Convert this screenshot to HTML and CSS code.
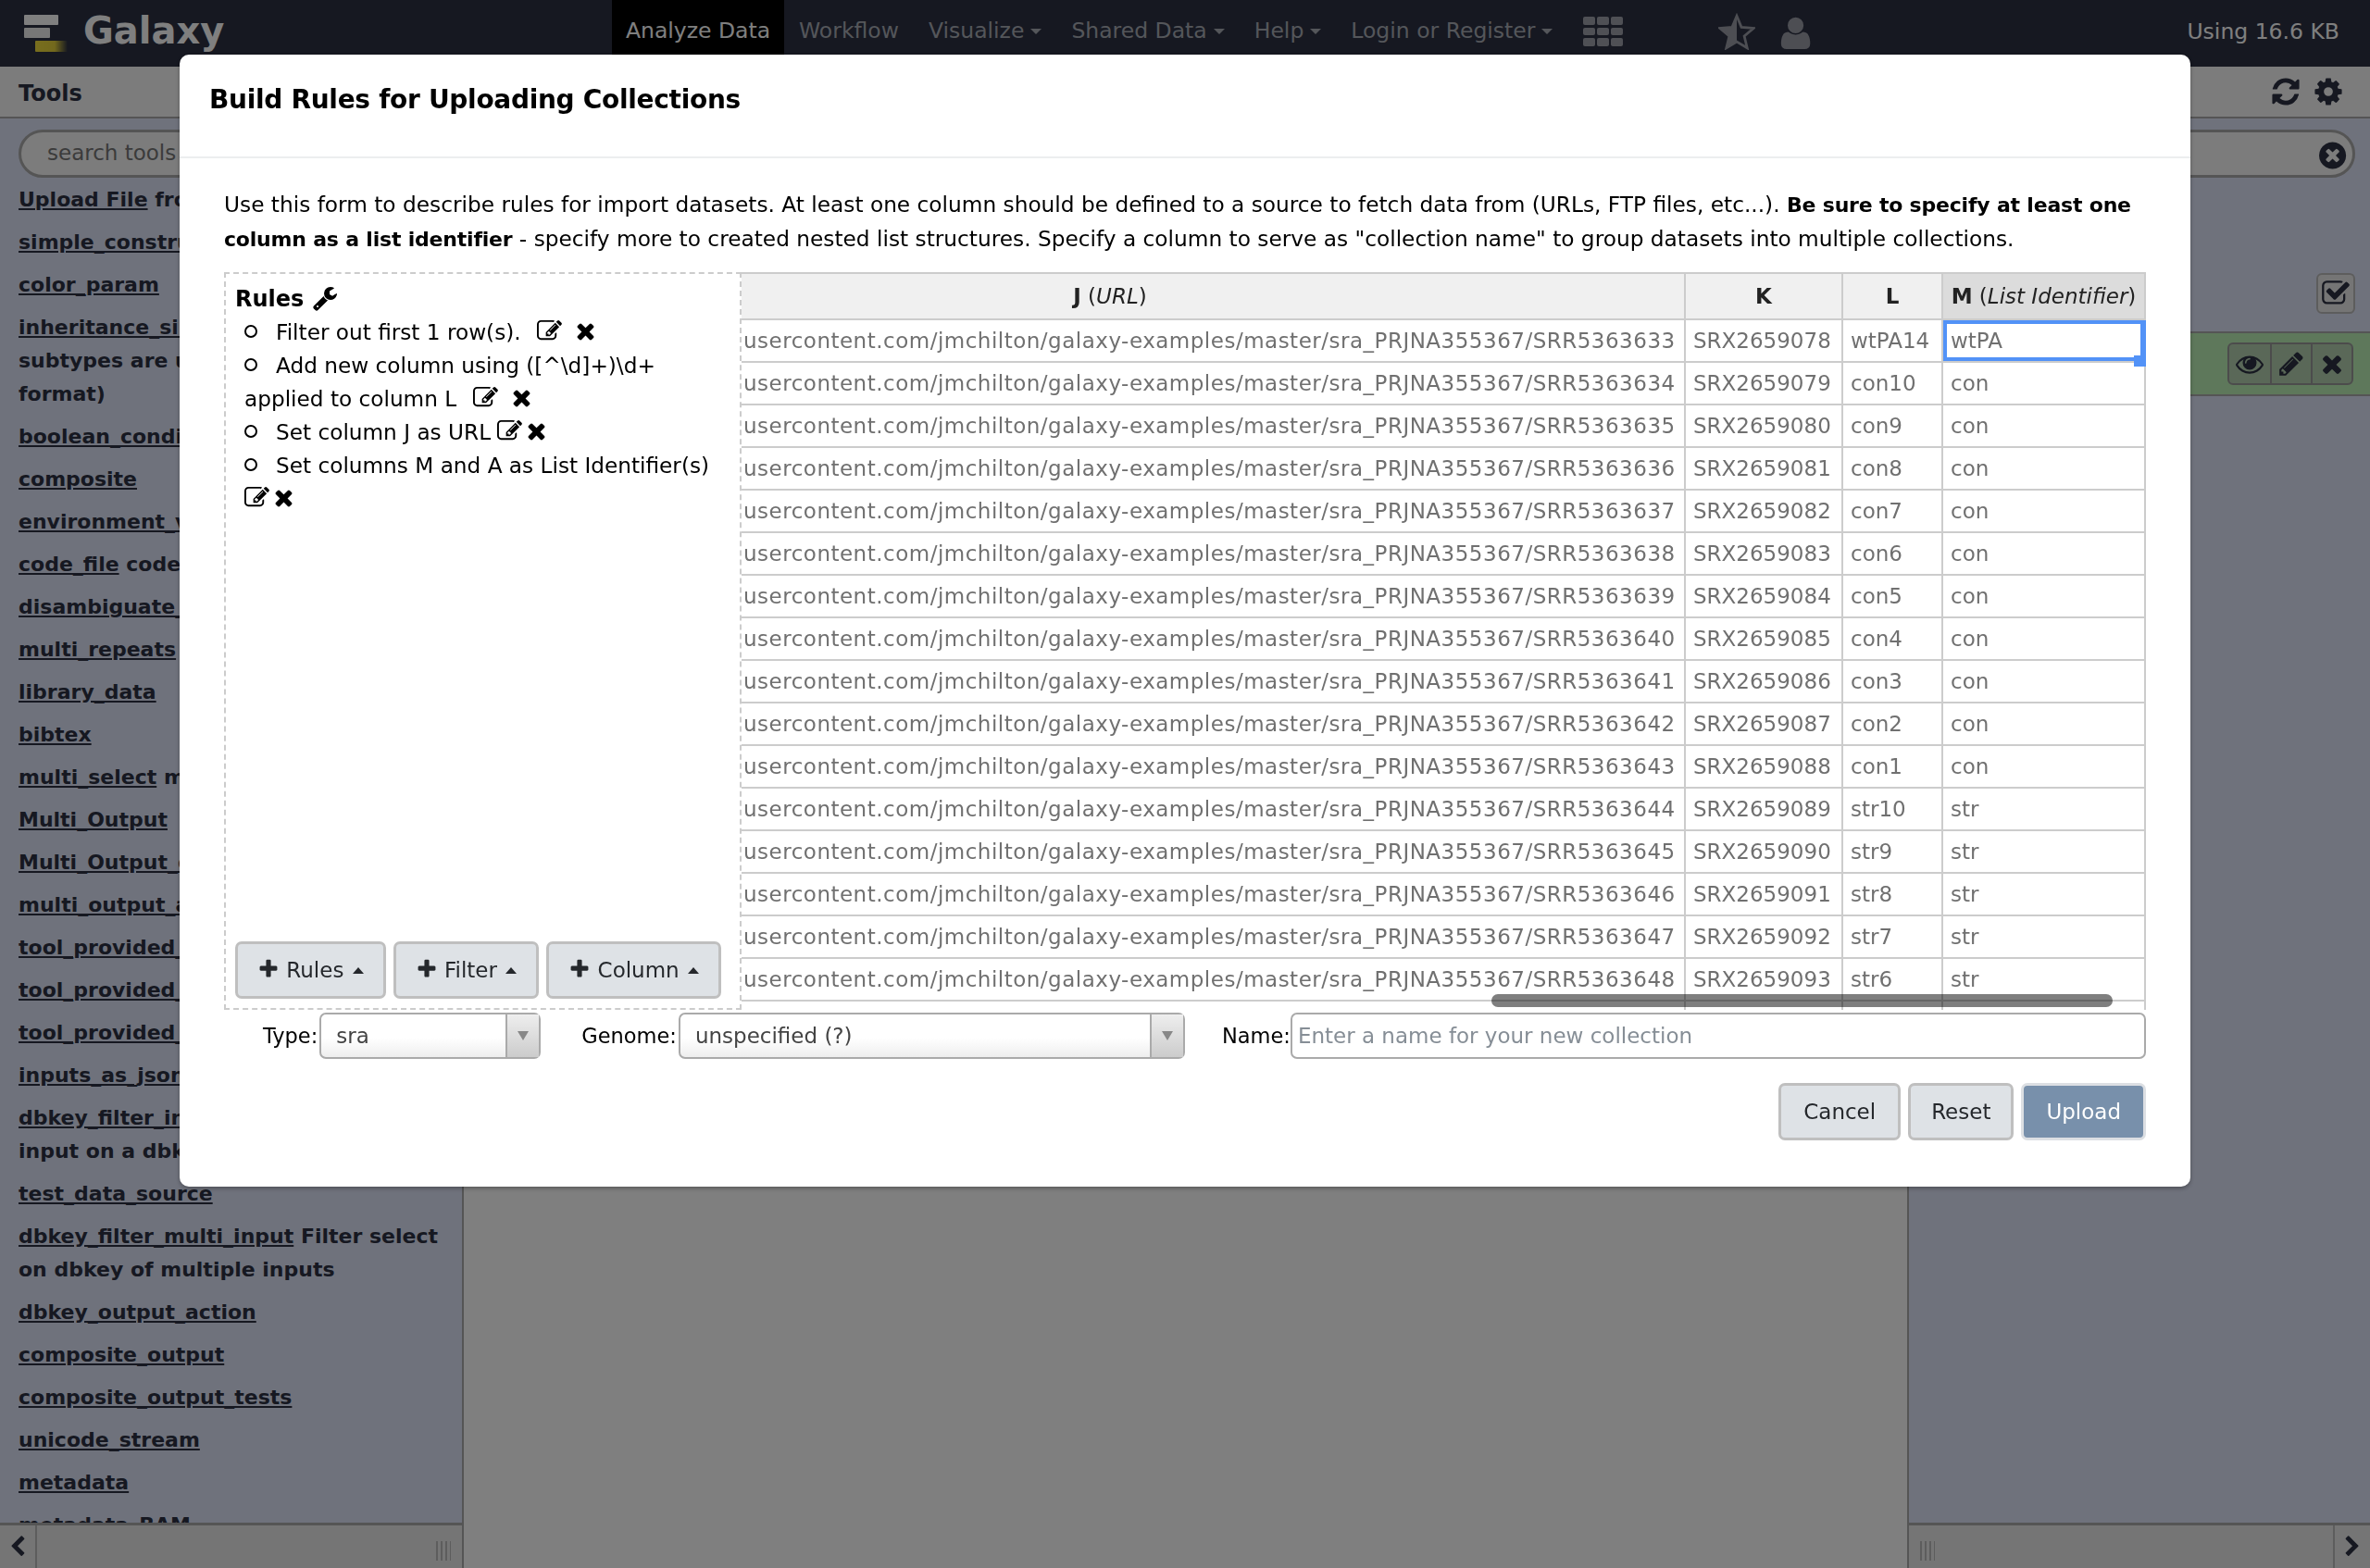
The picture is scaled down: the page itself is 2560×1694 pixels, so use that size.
FILE: index.html
```html
<!DOCTYPE html>
<html lang="en">
<head>
    <meta charset="UTF-8">
    <title>Galaxy</title>
    <link rel="stylesheet" href="styles.css">
</head>
<body>
    <svg class="icon-defs" xmlns="http://www.w3.org/2000/svg">
        <defs><linearGradient id="logo-gold"><stop offset="0" stop-color="#f0dc3c"/><stop offset=".6" stop-color="#e6d23a"/><stop offset="1" stop-color="#2c3143"/></linearGradient></defs>
        <symbol id="i-times" viewBox="0 0 1792 1792"><path d="M1490 1322q0 40-28 68l-136 136q-28 28-68 28t-68-28l-294-294-294 294q-28 28-68 28t-68-28l-136-136q-28-28-28-68t28-68l294-294-294-294q-28-28-28-68t28-68l136-136q28-28 68-28t68 28l294 294 294-294q28-28 68-28t68 28l136 136q28 28 28 68t-28 68l-294 294 294 294q28 28 28 68z"/></symbol>
        <symbol id="i-plus" viewBox="0 0 1792 1792"><path d="M1600 736v192q0 40-28 68t-68 28h-416v416q0 40-28 68t-68 28h-192q-40 0-68-28t-28-68v-416h-416q-40 0-68-28t-28-68v-192q0-40 28-68t68-28h416v-416q0-40 28-68t68-28h192q40 0 68 28t28 68v416h416q40 0 68 28t28 68z"/></symbol>
        <symbol id="i-left" viewBox="0 0 1792 1792"><path d="M1427 301l-531 531 531 531q19 19 19 45t-19 45l-166 166q-19 19-45 19t-45-19l-742-742q-19-19-19-45t19-45l742-742q19-19 45-19t45 19l166 166q19 19 19 45t-19 45z"/></symbol>
        <symbol id="i-right" viewBox="0 0 1792 1792"><path d="M1363 877l-742 742q-19 19-45 19t-45-19l-166-166q-19-19-19-45t19-45l531-531-531-531q-19-19-19-45t19-45l166-166q19-19 45-19t45 19l742 742q19 19 19 45t-19 45z"/></symbol>
        <symbol id="i-user" viewBox="0 0 1792 1792"><path d="M1536 1399q0 120-73 189.500t-194 69.500h-874q-121 0-194-69.500t-73-189.500q0-53 3.500-103.500t14-109 26.500-108.500 43-97.500 62-81 85.500-53.500 111.500-20q9 0 42 21.500t74.500 48 108 48 133.500 21.500 133.500-21.500 108-48 74.500-48 42-21.500q61 0 111.500 20t85.500 53.500 62 81 43 97.500 26.500 108.500 14 109 3.500 103.500zm-320-887q0 159-112.500 271.500t-271.500 112.500-271.500-112.500-112.500-271.500 112.500-271.500 271.500-112.500 271.500 112.500 112.500 271.500z"/></symbol>
        <symbol id="i-refresh" viewBox="0 0 1792 1792"><path d="M1639 1056q0 5-1 7-64 268-268 434.500t-478 166.500q-146 0-282.500-55t-243.500-157l-129 129q-19 19-45 19t-45-19-19-45v-448q0-26 19-45t45-19h448q26 0 45 19t19 45-19 45l-137 137q71 66 161 102t187 36q134 0 250-65t186-179q11-17 53-117 8-23 30-23h192q13 0 22.500 9.500t9.500 22.500zm25-800v448q0 26-19 45t-45 19h-448q-26 0-45-19t-19-45 19-45l138-138q-148-137-349-137-134 0-250 65t-186 179q-11 17-53 117-8 23-30 23h-199q-13 0-22.500-9.500t-9.500-22.500v-7q65-268 270-434.500t480-166.500q146 0 284 55.500t245 156.500l130-129q19-19 45-19t45 19 19 45z"/></symbol>
        <symbol id="i-cog" viewBox="0 0 1792 1792"><path d="M1152 896q0-106-75-181t-181-75-181 75-75 181 75 181 181 75 181-75 75-181zm512-109v222q0 12-8 23t-20 13l-185 28q-19 54-39 91 35 50 107 138 10 12 10 25t-9 23q-27 37-99 108t-94 71q-12 0-26-9l-138-108q-44 23-91 38-16 136-29 186-7 28-36 28h-222q-14 0-24.500-8.500t-11.500-21.500l-28-184q-49-16-90-37l-141 107q-10 9-25 9-14 0-25-11-126-114-165-168-7-10-7-23 0-12 8-23 15-21 51-66.500t54-70.500q-27-50-41-99l-183-27q-13-2-21-12.500t-8-23.500v-222q0-12 8-23t19-13l186-28q14-46 39-92-40-57-107-138-10-12-10-24 0-10 9-23 26-36 98.500-107.500t94.500-71.500q13 0 26 10l138 107q44-23 91-38 16-136 29-186 7-28 36-28h222q14 0 24.500 8.500t11.500 21.500l28 184q49 16 90 37l142-107q9-9 24-9 13 0 25 10 129 119 165 170 7 8 7 22 0 12-8 23-15 21-51 66.500t-54 70.500q26 50 41 98l183 28q13 2 21 12.500t8 23.500z"/></symbol>
        <symbol id="i-wrench" viewBox="0 0 1792 1792"><path d="M448 1472q0-26-19-45t-45-19-45 19-19 45 19 45 45 19 45-19 19-45zm644-420l-682 682q-37 37-90 37-52 0-91-37l-106-108q-38-36-38-90 0-53 38-91l681-681q39 98 114.500 173.500t173.500 114.500zm634-435q0 39-23 106-47 134-164.500 217.500t-258.500 83.500q-185 0-316.500-131.500t-131.500-316.500 131.500-316.500 316.500-131.500q58 0 121.500 16.500t107.500 46.500q16 11 16 28t-16 28l-293 169v224l193 107q5-3 79-48.500t135.500-81 70.500-35.500q15 0 23.500 10t8.500 25z"/></symbol>
        <symbol id="i-pencil" viewBox="0 0 1792 1792"><path d="M491 1536l91-91-235-235-91 91v107h128v128h107zm523-928q0-22-22-22-10 0-17 7l-542 542q-7 7-7 17 0 22 22 22 10 0 17-7l542-542q7-7 7-17zm-54-192l416 416-832 832h-416v-416zm683 96q0 53-37 90l-166 166-416-416 166-165q36-38 90-38 53 0 91 38l235 234q37 39 37 91z"/></symbol>
        <symbol id="i-eye" viewBox="0 0 1792 1792"><path d="M1664 960q-152-236-381-353 61 104 61 225 0 185-131.500 316.500t-316.500 131.500-316.500-131.500-131.500-316.500q0-121 61-225-229 117-381 353 133 205 333.500 326.500t434.500 121.500 434.500-121.500 333.500-326.500zm-720-384q0-20-14-34t-34-14q-125 0-214.500 89.500t-89.500 214.500q0 20 14 34t34 14 34-14 14-34q0-86 61-147t147-61q20 0 34-14t14-34zm848 384q0 34-20 69-140 230-376.500 368.500t-499.500 138.500-499.500-139-376.500-368q-20-35-20-69t20-69q140-229 376.500-368t499.500-139 499.500 139 376.500 368q20 35 20 69z"/></symbol>
        <symbol id="i-edit" viewBox="0 0 1792 1792"><path d="M888 1184l116-116-152-152-116 116v56h96v96h56zm440-720q-16-16-33 1l-350 350q-17 17-1 33t33-1l350-350q17-17 1-33zm80 594v190q0 119-84.500 203.500t-203.500 84.500h-832q-119 0-203.500-84.500t-84.500-203.500v-832q0-119 84.500-203.500t203.500-84.500h832q63 0 117 25 15 7 18 23 3 17-9 29l-49 49q-14 14-32 8-23-6-45-6h-832q-66 0-113 47t-47 113v832q0 66 47 113t113 47h832q66 0 113-47t47-113v-126q0-13 9-22l64-64q15-15 35-7t20 29zm-96-738l288 288-672 672h-288v-288zm444 132l-92 92-288-288 92-92q28-28 68-28t68 28l152 152q28 28 28 68t-28 68z"/></symbol>
        <symbol id="i-check" viewBox="0 0 1792 1792"><path d="M1472 930v318q0 119-84.500 203.500t-203.500 84.500h-832q-119 0-203.500-84.500t-84.500-203.500v-832q0-119 84.500-203.500t203.500-84.500h832q63 0 117 25 15 7 18 23 3 17-9 29l-49 49q-10 10-23 10-3 0-9-2-23-6-45-6h-832q-66 0-113 47t-47 113v832q0 66 47 113t113 47h832q66 0 113-47t47-113v-254q0-13 9-22l64-64q10-10 23-10 6 0 12 3 20 8 20 29zm231-489l-814 814q-24 24-57 24t-57-24l-430-430q-24-24-24-57t24-57l110-110q24-24 57-24t57 24l263 263 647-647q24-24 57-24t57 24l110 110q24 24 24 57t-24 57z"/></symbol>
        <symbol id="i-clear" viewBox="0 0 1792 1792"><path d="M1149 1122q0-26-19-45l-181-181 181-181q19-19 19-45 0-27-19-46l-90-90q-19-19-46-19-26 0-45 19l-181 181-181-181q-19-19-45-19-27 0-46 19l-90 90q-19 19-19 46 0 26 19 45l181 181-181 181q-19 19-19 45 0 27 19 46l90 90q19 19 46 19 26 0 45-19l181-181 181 181q19 19 45 19 27 0 46-19l90-90q19-19 19-46zm387-226q0 209-103 385.500t-279.500 279.500-385.500 103-385.500-103-279.500-279.500-103-385.500 103-385.500 279.500-279.500 385.500-103 385.500 103 279.500 279.500 103 385.500z"/></symbol>
    </svg>

    <!-- masthead -->
    <header class="masthead">
        <a class="brand">
            <svg class="brand-logo" viewBox="0 0 48 41"><rect x="0" y="0" width="37" height="11" rx="1" fill="#fff"/><rect x="0" y="14" width="28" height="11" rx="1" fill="#eee"/><rect x="12" y="28" width="35" height="12" rx="1" fill="url(#logo-gold)"/></svg>
            <span class="brand-name">Galaxy</span>
        </a>
        <nav class="nav">
            <a class="nav-item active">Analyze Data</a>
            <a class="nav-item">Workflow</a>
            <a class="nav-item">Visualize<i class="caret-down"></i></a>
            <a class="nav-item">Shared Data<i class="caret-down"></i></a>
            <a class="nav-item">Help<i class="caret-down"></i></a>
            <a class="nav-item">Login or Register<i class="caret-down"></i></a>
            <span class="apps-grid"><i></i><i></i><i></i><i></i><i></i><i></i><i></i><i></i><i></i></span>
            <svg class="nav-star" viewBox="0 0 36 36"><path d="M18 3l4.500 10.800 11.800 1-9 7.700 2.800 11.500L18 27.900 7.900 34l2.800-11.500-9-7.700 11.800-1z" fill="none" stroke="#9a9ca6" stroke-width="2.500"/><path d="M18 3v24.900L7.900 34l2.800-11.500-9-7.700 11.800-1z" fill="#9a9ca6"/></svg>
            <svg class="nav-user"><use href="#i-user"/></svg>
        </nav>
        <span class="quota">Using 16.6 KB</span>
    </header>

    <div class="panels">
        <!-- tools panel -->
        <aside class="side tools">
            <div class="side-head">
                <span class="side-title">Tools</span>
            </div>
            <div class="search-pill"><span class="search-hint">search tools</span></div>
            <div class="tool-list">
                <p><a>Upload File</a> from your computer</p>
                <p><a>simple_constructs</a></p>
                <p><a>color_param</a></p>
                <p><a>inheritance_simple</a> tool<br>subtypes are used<br>format)</p>
                <p><a>boolean_conditional</a></p>
                <p><a>composite</a></p>
                <p><a>environment_variables</a></p>
                <p><a>code_file</a> code</p>
                <p><a>disambiguate_cond</a></p>
                <p><a>multi_repeats</a></p>
                <p><a>library_data</a></p>
                <p><a>bibtex</a></p>
                <p><a>multi_select</a> multi</p>
                <p><a>Multi_Output</a></p>
                <p><a>Multi_Output_dynamic</a></p>
                <p><a>multi_output_assign</a></p>
                <p><a>tool_provided_metadata</a></p>
                <p><a>tool_provided_metadata</a></p>
                <p><a>tool_provided_metadata</a></p>
                <p><a>inputs_as_json</a></p>
                <p><a>dbkey_filter_input</a> Filter<br>input on a dbkey</p>
                <p><a>test_data_source</a></p>
                <p><a>dbkey_filter_multi_input</a> Filter select<br>on dbkey of multiple inputs</p>
                <p><a>dbkey_output_action</a></p>
                <p><a>composite_output</a></p>
                <p><a>composite_output_tests</a></p>
                <p><a>unicode_stream</a></p>
                <p><a>metadata</a></p>
                <p><a>metadata_BAM</a></p>
            </div>
            <div class="side-foot">
                <span class="foot-arrow"><svg class="foot-icon"><use href="#i-left"/></svg></span>
                <span class="foot-grip"></span>
            </div>
        </aside>

        <main class="center"></main>

        <!-- history panel -->
        <aside class="side history">
            <div class="side-head side-head-right">
                <svg class="head-icon"><use href="#i-refresh"/></svg>
                <svg class="head-icon"><use href="#i-cog"/></svg>
            </div>
            <div class="search-pill search-pill-right"><svg class="clear-icon"><use href="#i-clear"/></svg></div>
            <div class="history-tools"><span class="check-btn"><svg><use href="#i-check"/></svg></span></div>
            <div class="history-item">
                <span class="item-btns">
                    <span><svg><use href="#i-eye"/></svg></span>
                    <span><svg><use href="#i-pencil"/></svg></span>
                    <span><svg><use href="#i-times"/></svg></span>
                </span>
            </div>
            <div class="history-fill"></div>
            <div class="side-foot side-foot-right">
                <span class="foot-grip"></span>
                <span class="foot-arrow"><svg class="foot-icon"><use href="#i-right"/></svg></span>
            </div>
        </aside>
    </div>

    <div class="backdrop"></div>

    <!-- rule builder modal -->
    <section class="modal">
        <h4 class="modal-title">Build Rules for Uploading Collections</h4>
        <div class="modal-body">
            <p class="help">Use this form to describe rules for import datasets. At least one column should be defined to a source to fetch data from (URLs, FTP files, etc...). <b>Be sure to specify at least one column as a list identifier</b> - specify more to created nested list structures. Specify a column to serve as "collection name" to group datasets into multiple collections.</p>
            <div class="builder">
                <div class="rules">
                    <div class="rules-title">Rules <svg class="ico ico-wrench"><use href="#i-wrench"/></svg></div>
                    <ul class="rule-list">
                        <li>Filter out first 1 row(s). <span class="rule-actions wide"><svg class="ico"><use href="#i-edit"/></svg><svg class="ico"><use href="#i-times"/></svg></span></li>
                        <li>Add new column using ([^\d]+)\d+ applied to column L <span class="rule-actions wide"><svg class="ico"><use href="#i-edit"/></svg><svg class="ico"><use href="#i-times"/></svg></span></li>
                        <li>Set column J as URL <span class="rule-actions"><svg class="ico"><use href="#i-edit"/></svg><svg class="ico"><use href="#i-times"/></svg></span></li>
                        <li>Set columns M and A as List Identifier(s) <span class="rule-actions"><svg class="ico"><use href="#i-edit"/></svg><svg class="ico"><use href="#i-times"/></svg></span></li>
                    </ul>
                    <div class="rule-btns">
                        <button class="btn"><svg class="ico"><use href="#i-plus"/></svg> Rules <i class="caret-up"></i></button>
                        <button class="btn"><svg class="ico"><use href="#i-plus"/></svg> Filter <i class="caret-up"></i></button>
                        <button class="btn"><svg class="ico"><use href="#i-plus"/></svg> Column <i class="caret-up"></i></button>
                    </div>
                </div>
                <div class="grid-wrap">
                    <table class="grid">
                        <colgroup><col class="col-j"><col class="col-k"><col class="col-l"><col class="col-m"></colgroup>
                        <thead>
                            <tr><th class="head-url"><b>J</b> (<em>URL</em>)</th><th><b>K</b></th><th><b>L</b></th><th class="picked"><b>M</b> (<em>List Identifier</em>)</th></tr>
                        </thead>
                        <tbody>
                            <tr><td>usercontent.com/jmchilton/galaxy-examples/master/sra_PRJNA355367/SRR5363633</td><td>SRX2659078</td><td>wtPA14</td><td class="current">wtPA<i class="handle"></i></td></tr>
                            <tr><td>usercontent.com/jmchilton/galaxy-examples/master/sra_PRJNA355367/SRR5363634</td><td>SRX2659079</td><td>con10</td><td>con</td></tr>
                            <tr><td>usercontent.com/jmchilton/galaxy-examples/master/sra_PRJNA355367/SRR5363635</td><td>SRX2659080</td><td>con9</td><td>con</td></tr>
                            <tr><td>usercontent.com/jmchilton/galaxy-examples/master/sra_PRJNA355367/SRR5363636</td><td>SRX2659081</td><td>con8</td><td>con</td></tr>
                            <tr><td>usercontent.com/jmchilton/galaxy-examples/master/sra_PRJNA355367/SRR5363637</td><td>SRX2659082</td><td>con7</td><td>con</td></tr>
                            <tr><td>usercontent.com/jmchilton/galaxy-examples/master/sra_PRJNA355367/SRR5363638</td><td>SRX2659083</td><td>con6</td><td>con</td></tr>
                            <tr><td>usercontent.com/jmchilton/galaxy-examples/master/sra_PRJNA355367/SRR5363639</td><td>SRX2659084</td><td>con5</td><td>con</td></tr>
                            <tr><td>usercontent.com/jmchilton/galaxy-examples/master/sra_PRJNA355367/SRR5363640</td><td>SRX2659085</td><td>con4</td><td>con</td></tr>
                            <tr><td>usercontent.com/jmchilton/galaxy-examples/master/sra_PRJNA355367/SRR5363641</td><td>SRX2659086</td><td>con3</td><td>con</td></tr>
                            <tr><td>usercontent.com/jmchilton/galaxy-examples/master/sra_PRJNA355367/SRR5363642</td><td>SRX2659087</td><td>con2</td><td>con</td></tr>
                            <tr><td>usercontent.com/jmchilton/galaxy-examples/master/sra_PRJNA355367/SRR5363643</td><td>SRX2659088</td><td>con1</td><td>con</td></tr>
                            <tr><td>usercontent.com/jmchilton/galaxy-examples/master/sra_PRJNA355367/SRR5363644</td><td>SRX2659089</td><td>str10</td><td>str</td></tr>
                            <tr><td>usercontent.com/jmchilton/galaxy-examples/master/sra_PRJNA355367/SRR5363645</td><td>SRX2659090</td><td>str9</td><td>str</td></tr>
                            <tr><td>usercontent.com/jmchilton/galaxy-examples/master/sra_PRJNA355367/SRR5363646</td><td>SRX2659091</td><td>str8</td><td>str</td></tr>
                            <tr><td>usercontent.com/jmchilton/galaxy-examples/master/sra_PRJNA355367/SRR5363647</td><td>SRX2659092</td><td>str7</td><td>str</td></tr>
                            <tr><td>usercontent.com/jmchilton/galaxy-examples/master/sra_PRJNA355367/SRR5363648</td><td>SRX2659093</td><td>str6</td><td>str</td></tr>
                            <tr><td></td><td></td><td></td><td></td></tr>
                        </tbody>
                    </table>
                    <div class="grid-scroll"></div>
                </div>
            </div>
            <div class="options">
                <label class="opt-label opt-type">Type:</label>
                <div class="select select-type"><span>sra</span><i class="select-arrow"></i></div>
                <label class="opt-label opt-genome">Genome:</label>
                <div class="select select-genome"><span>unspecified (?)</span><i class="select-arrow"></i></div>
                <label class="opt-label opt-name">Name:</label>
                <div class="name-input">Enter a name for your new collection</div>
            </div>
            <div class="actions">
                <button class="btn">Cancel</button>
                <button class="btn btn-reset">Reset</button>
                <button class="btn btn-primary">Upload</button>
            </div>
        </div>
    </section>
</body>
</html>
```

FILE: styles.css
```css
* {
    box-sizing: border-box;
}
html, body {
    height: 100%;
}
body {
    margin: 0;
    height: 1694px;
    overflow: hidden;
    display: flex;
    flex-direction: column;
    font-family: "DejaVu Sans", sans-serif;
    font-size: 23px;
    line-height: 36px;
    color: #2c3143;
    background: #fff;
}
.icon-defs {
    position: absolute;
    width: 0;
    height: 0;
}
svg {
    fill: currentColor;
}

/* masthead */
.masthead {
    flex: none;
    height: 72px;
    display: flex;
    align-items: center;
    background: #2c3143;
    color: #ccc;
}
.brand {
    width: 661px;
    display: flex;
    align-items: center;
    padding: 0 0 6px 26px;
}
.brand-logo {
    width: 48px;
    height: 41px;
    margin-top: 6px;
}
.brand-name {
    margin-left: 16px;
    font-size: 40px;
    font-weight: bold;
    color: #fff;
}
.nav {
    flex: 1;
    height: 72px;
    display: flex;
    align-items: center;
}
.nav-item {
    height: 72px;
    padding: 0 16px;
    line-height: 66px;
    font-size: 23.5px;
    color: #a9acb5;
    white-space: nowrap;
}
.nav-item.active {
    background: #000;
    color: #fff;
    width: 186px;
    padding: 0;
    text-align: center;
}
.caret-down {
    display: inline-block;
    margin-left: 7px;
    vertical-align: 4px;
    border: 6px solid transparent;
    border-top-color: currentColor;
    border-bottom: 0;
}
.apps-grid {
    display: grid;
    grid-template-columns: repeat(3, 12.7px);
    grid-auto-rows: 8.7px;
    gap: 3px 2px;
    margin: 0 0 4px 17px;
}
.apps-grid i {
    background: #9fa1ab;
    border-radius: 2px;
}
.nav-star {
    width: 40px;
    height: 40px;
    margin: 0 0 4px 103px;
}
.nav-user {
    width: 40px;
    height: 40px;
    margin-left: 25px;
    color: #9a9ca6;
}
.quota {
    padding-right: 33px;
    color: #fff;
    font-size: 23.5px;
    padding-bottom: 4px;
}

/* panels */
.panels {
    flex: 1;
    min-height: 0;
    display: grid;
    grid-template-columns: 501px 1fr 500px;
}
.side {
    min-height: 0;
    display: flex;
    flex-direction: column;
    background: #dfe5f9;
    overflow: hidden;
}
.tools {
    border-right: 2px solid #aaa;
}
.history {
    border-left: 2px solid #aaa;
}
.center {
    background: #fff;
}
.side-head {
    flex: none;
    height: 56px;
    display: flex;
    align-items: center;
    padding: 4px 20px 0;
    background: #f8f8f8;
    border-bottom: 2px solid #aaa;
}
.side-head-right {
    justify-content: flex-end;
    gap: 12px;
    padding: 0 28px 0 0;
}
.side-title {
    font-weight: bold;
    font-size: 24px;
    color: #2c3143;
}
.head-icon {
    width: 34px;
    height: 34px;
}
.search-pill {
    flex: none;
    height: 52px;
    margin: 12px 0 6px 20px;
    width: 500px;
    border: 3px solid #aaa;
    border-radius: 26px;
    background: #f8f8f8;
    padding-left: 28px;
    line-height: 44px;
}
.search-hint {
    color: #777;
}
.search-pill-right {
    width: auto;
    margin-left: 0;
    margin-right: 16px;
    display: flex;
    justify-content: flex-end;
    align-items: center;
    padding: 4px 2px 0 0;
}
.clear-icon {
    width: 34px;
    height: 34px;
}
.tool-list {
    flex: 1;
    min-height: 0;
    overflow: hidden;
    padding: 0 20px;
    font-weight: bold;
    font-size: 22px;
}
.tool-list p {
    margin: 0 0 10px;
    white-space: nowrap;
}
.tool-list a {
    text-decoration: underline;
}
.side-foot {
    flex: none;
    height: 49px;
    display: flex;
    align-items: stretch;
    background: #ebebeb;
    border-top: 3px solid #aaa;
}
.foot-arrow {
    width: 40px;
    display: flex;
    align-items: center;
    justify-content: center;
    border-right: 2px solid #bbb;
}
.foot-icon {
    width: 24px;
    height: 24px;
}
.foot-grip {
    flex: 1;
    margin: 17px 12px 8px 0;
    background: repeating-linear-gradient(90deg, #bbb 0 2px, transparent 2px 5px) right / 16px 100% no-repeat;
}
.side-foot-right .foot-arrow {
    border-right: 0;
    border-left: 2px solid #bbb;
}
.side-foot-right .foot-grip {
    margin: 17px 0 8px 12px;
    background-position: left;
}
.history-tools {
    flex: none;
    display: flex;
    justify-content: flex-end;
    padding: 97px 16px 0 0;
    height: 160px;
}
.check-btn {
    width: 42px;
    height: 44px;
    display: flex;
    align-items: center;
    justify-content: center;
    background: #ebebeb;
    border: 2px solid #bbb;
    border-radius: 6px;
}
.check-btn svg {
    width: 32px;
    height: 32px;
}
.history-item {
    flex: none;
    height: 70px;
    display: flex;
    justify-content: flex-end;
    align-items: center;
    padding-right: 18px;
    background: #bdf0b6;
    border-top: 2px solid #aaa;
    border-bottom: 2px solid #aaa;
}
.item-btns {
    display: flex;
    border: 2px solid #999;
    border-radius: 6px;
    background: #b4d0b0;
}
.item-btns span {
    width: 44px;
    height: 42px;
    display: flex;
    align-items: center;
    justify-content: center;
    border-left: 2px solid #999;
}
.item-btns span:first-child {
    border-left: 0;
}
.item-btns svg {
    width: 30px;
    height: 30px;
}
.history-fill {
    flex: 1;
}

.backdrop {
    position: fixed;
    inset: 0;
    background: rgba(0, 0, 0, .5);
}

/* modal */
.modal {
    position: absolute;
    left: 194px;
    top: 59px;
    width: 2172px;
    height: 1223px;
    background: #fff;
    border-radius: 10px;
    color: #000;
    box-shadow: 0 2px 4px rgba(0, 0, 0, .3);
}
.modal-title {
    margin: 0;
    height: 112px;
    padding: 29px 32px 0;
    font-size: 28px;
    letter-spacing: -.3px;
    line-height: 40px;
    font-weight: bold;
    border-bottom: 2px solid #eceeef;
}
.modal-body {
    padding: 32px 48px 0;
}
.help {
    margin: 0 0 7px;
    height: 84px;
    font-size: 23.25px;
}
.help b {
    font-size: 22px;
    letter-spacing: -.2px;
}
.builder {
    display: flex;
    height: 797px;
}
.rules {
    flex: none;
    width: 559px;
    display: flex;
    flex-direction: column;
    padding: 9px 0 10px 10px;
    border: 2px dashed #ccc;
}
.rules-title {
    font-size: 24px;
    font-weight: bold;
}
.ico {
    width: 24px;
    height: 24px;
    vertical-align: -3px;
}
.ico-wrench {
    width: 28px;
    height: 28px;
    vertical-align: -5px;
}
.rule-list {
    flex: 1;
    margin: 0 13px 0 0;
    padding: 0 0 0 10px;
    list-style: none;
    font-size: 23.2px;
}
.rule-list li::before {
    content: "";
    display: inline-block;
    width: 10px;
    height: 10px;
    margin-right: 20px;
    border: 2px solid #000;
    border-radius: 50%;
    vertical-align: 2px;
}
.rule-actions {
    white-space: nowrap;
}
.rule-actions .ico {
    width: 27px;
    height: 27px;
    vertical-align: -4px;
}
.rule-actions .ico + .ico {
    margin-left: 2px;
}
.rule-actions.wide .ico + .ico {
    margin-left: 12px;
}
.rule-actions.wide {
    margin-left: 10px;
}
.rule-btns {
    display: flex;
    gap: 8px;
}
.btn {
    height: 62px;
    padding: 0 24px;
    font: inherit;
    color: #25282c;
    background: #dee2e6;
    border: 3px solid #bfbfbf;
    border-radius: 7px;
    white-space: nowrap;
}
.rule-btns .btn {
    padding: 0 21px;
}
.btn-reset {
    padding: 0 22px;
}
.btn-primary {
    color: #fff;
    background: #7890ab;
    border-color: #dcdfe3;
}
.caret-up {
    display: inline-block;
    margin-left: 2px;
    vertical-align: 4px;
    border: 6px solid transparent;
    border-bottom: 7px solid currentColor;
    border-top: 0;
}

/* data table */
.grid-wrap {
    position: relative;
    flex: 1;
    min-width: 0;
    overflow: hidden;
}
.grid {
    width: 100%;
    table-layout: fixed;
    border-collapse: collapse;
    font-size: 23px;
}
.col-k { width: 170px; }
.col-l { width: 108px; }
.col-m { width: 219px; }
.grid th {
    height: 50px;
    padding: 0;
    font-weight: normal;
    background: #f0f0f0;
    border: 2px solid #ccc;
    border-left-width: 0;
    color: #222;
    white-space: nowrap;
    overflow: hidden;
}
.grid th.head-url {
    padding-right: 222px;
}
.grid th.picked {
    background: #dcdcdc;
}
.grid td {
    height: 46px;
    padding: 0 8px;
    line-height: 44px;
    color: #707070;
    white-space: nowrap;
    overflow: hidden;
    border-right: 2px solid #ccc;
    border-bottom: 2px solid #ccc;
}
.grid td:first-child {
    padding: 0 0 0 2px;
    letter-spacing: .5px;
}
.grid td.current {
    position: relative;
    overflow: visible;
    box-shadow: inset 0 0 0 4px #5292f7;
    border-right-color: #5292f7;
}
.handle {
    position: absolute;
    right: -2px;
    bottom: -6px;
    width: 13px;
    height: 12px;
    background: #5292f7;
}
.grid-scroll {
    position: absolute;
    left: 810px;
    right: 36px;
    top: 780px;
    height: 14px;
    border-radius: 7px;
    background: rgba(0, 0, 0, .5);
}

/* type, genome, name row */
.options {
    height: 50px;
    margin-top: 3px;
    display: flex;
    align-items: center;
    white-space: nowrap;
}
.opt-label {
    color: #000;
    font-size: 22.5px;
}
.opt-type { margin-left: 42px; margin-right: 2px; }
.opt-genome { margin-left: 44px; margin-right: 2px; }
.opt-name { margin-left: 40px; }
.select {
    position: relative;
    flex: none;
    height: 50px;
    display: flex;
    align-items: center;
    padding-left: 16px;
    border: 2px solid #aaa;
    border-radius: 7px;
    background: linear-gradient(#fff 55%, #eee);
    color: #444;
}
.select-type { width: 239px; }
.select-genome { width: 547px; }
.select-arrow {
    position: absolute;
    top: 0;
    right: 0;
    bottom: 0;
    width: 36px;
    border-left: 2px solid #aaa;
    background: linear-gradient(#eee, #ccc);
}
.select-arrow::after {
    content: "";
    position: absolute;
    left: 11px;
    top: 18px;
    border: 6px solid transparent;
    border-top: 10px solid #888;
    border-bottom: 0;
}
.name-input {
    flex: 1;
    height: 50px;
    padding-left: 6px;
    line-height: 46px;
    color: #868e96;
    border: 2px solid #aaa;
    border-radius: 7px;
}
.actions {
    display: flex;
    justify-content: flex-end;
    gap: 8px;
    margin-top: 26px;
}
```
